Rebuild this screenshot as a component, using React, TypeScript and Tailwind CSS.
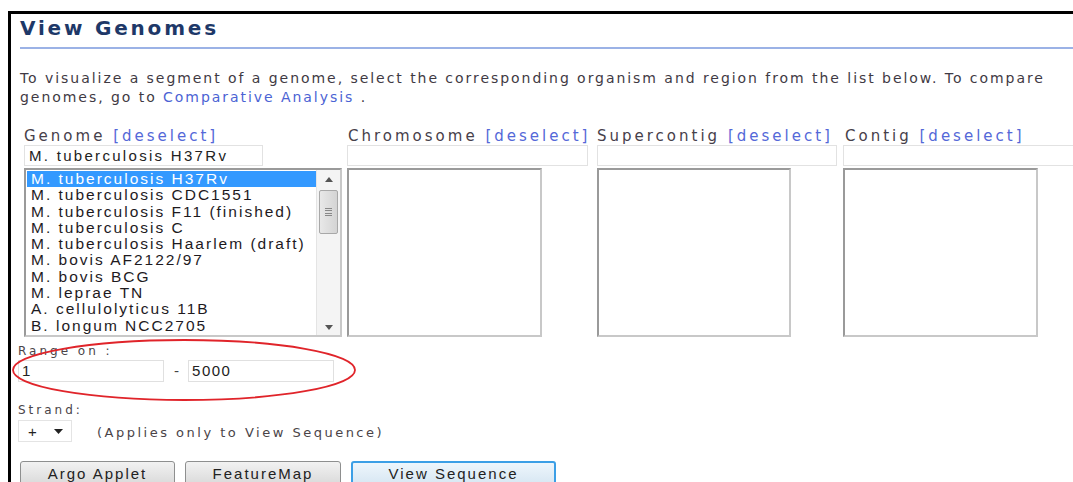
import React from "react";

const genomes = [
  "M. tuberculosis H37Rv",
  "M. tuberculosis CDC1551",
  "M. tuberculosis F11 (finished)",
  "M. tuberculosis C",
  "M. tuberculosis Haarlem (draft)",
  "M. bovis AF2122/97",
  "M. bovis BCG",
  "M. leprae TN",
  "A. cellulolyticus 11B",
  "B. longum NCC2705",
];

const verdana = { fontFamily: "'DejaVu Sans', Verdana, sans-serif" };
const arial = { fontFamily: "'Liberation Sans', Arial, sans-serif" };

function Label({ name }: { name: string }) {
  return (
    <div
      className="text-[15px] leading-[18px] text-[#46404a] whitespace-nowrap tracking-[3px]"
      style={verdana}
    >
      {name} <span className="text-[#5468d8]">[deselect]</span>
    </div>
  );
}

function EmptyList({ w }: { w: string }) {
  return (
    <div
      className={`${w} h-[169px] border-[2px] border-t-[#9a9a9a] border-l-[#9a9a9a] border-r-[#c8c8c8] border-b-[#c8c8c8] bg-white`}
    />
  );
}

export default function App() {
  return (
    <div className="relative w-[1073px] h-[482px] overflow-hidden bg-white">
      <div className="ml-[8px] mt-[11px] h-[471px] border-t-[3px] border-l-[3px] border-black pl-[9px]">
        <h1
          className="text-[20px] leading-[24px] font-bold text-[#1e3868] pt-[2px] tracking-[2.8px]"
          style={verdana}
        >
          View Genomes
        </h1>
        <div className="mt-[7px] h-[2px] bg-[#9bb2e6]" />
        <p
          className="mt-[20px] text-[14px] leading-[19px] text-[#3f3a44] tracking-[1.95px] whitespace-nowrap"
          style={verdana}
        >
          To visualize a segment of a genome, select the corresponding organism and region from the list below. To compare
          <br />
          genomes, go to <span className="text-[#4b63d4]">Comparative Analysis</span> .
        </p>

        <div className="mt-[20px] flex">
          {/* Genome column */}
          <div className="ml-[4px] w-[324px] shrink-0 flex flex-col">
            <Label name="Genome" />
            <div
              className="w-[239px] h-[21px] border border-[#e2e2e2] px-[4px] text-[15px] leading-[19px] text-[#222] tracking-[2.3px] whitespace-nowrap"
              style={arial}
            >
              M. tuberculosis H37Rv
            </div>
            <div className="mt-[2px] w-[318px] h-[169px] flex border-[2px] border-t-[#9a9a9a] border-l-[#9a9a9a] border-r-[#c8c8c8] border-b-[#c8c8c8] bg-white">
              <div className="flex-1 pt-[1px] pl-[1px] overflow-hidden" style={arial}>
                {genomes.map((g, i) => (
                  <div
                    key={g}
                    className={`h-[16.3px] pl-[4px] text-[15.5px] leading-[16.3px] whitespace-nowrap tracking-[2px] ${
                      i === 0 ? "bg-[#3399ff] text-white" : "text-[#1e1a1e]"
                    }`}
                  >
                    {g}
                  </div>
                ))}
              </div>
              {/* scrollbar */}
              <div className="w-[24px] flex flex-col items-center bg-[#f4f4f4] border-l border-[#e4e4e4]">
                <div className="h-[18px] flex items-center justify-center">
                  <svg width="8" height="5" viewBox="0 0 8 5">
                    <path d="M0 5 L4 0 L8 5 Z" fill="#555" />
                  </svg>
                </div>
                <div className="mt-[2px] w-[19px] h-[44px] rounded-[2px] border border-[#a8a8a8] bg-gradient-to-r from-[#e8e8e8] to-[#d4d4d4] flex items-center justify-center">
                  <div className="w-[7px] h-[8px] flex flex-col justify-between">
                    <div className="h-[1px] bg-[#888]" />
                    <div className="h-[1px] bg-[#888]" />
                    <div className="h-[1px] bg-[#888]" />
                    <div className="h-[1px] bg-[#888]" />
                  </div>
                </div>
                <div className="flex-1" />
                <div className="h-[16px] flex items-center justify-center">
                  <svg width="8" height="5" viewBox="0 0 8 5">
                    <path d="M0 0 L8 0 L4 5 Z" fill="#555" />
                  </svg>
                </div>
              </div>
            </div>
          </div>

          {/* Chromosome column */}
          <div className="w-[249px] shrink-0 flex flex-col">
            <Label name="Chromosome" />
            <div className="-ml-[1px] w-[241px] h-[21px] border border-[#e2e2e2]" />
            <div className="-ml-[1px] mt-[2px]">
              <EmptyList w="w-[195px]" />
            </div>
          </div>

          {/* Supercontig column */}
          <div className="w-[248px] shrink-0 flex flex-col">
            <Label name="Supercontig" />
            <div className="w-[240px] h-[21px] border border-[#e2e2e2]" />
            <div className="mt-[2px]">
              <EmptyList w="w-[194px]" />
            </div>
          </div>

          {/* Contig column */}
          <div className="flex-1 min-w-0 flex flex-col">
            <Label name="Contig" />
            <div className="-ml-[2px] w-[240px] h-[21px] border border-[#e2e2e2]" />
            <div className="-ml-[2px] mt-[2px]">
              <EmptyList w="w-[195px]" />
            </div>
          </div>
        </div>

        {/* Range */}
        <div
          className="ml-[-2px] mt-[7px] text-[12px] leading-[14px] text-[#4a4448] tracking-[3px]"
          style={verdana}
        >
          Range on :
        </div>
        <div className="ml-[-2px] mt-[2px] flex items-center">
          <div
            className="w-[146px] h-[22px] border border-[#e0e0e0] px-[3px] text-[15px] leading-[20px] text-[#222]"
            style={arial}
          >
            1
          </div>
          <span className="ml-[10px] mr-[9px] text-[14px] text-[#444]" style={verdana}>
            -
          </span>
          <div
            className="w-[146px] h-[22px] border border-[#e0e0e0] px-[3px] text-[15px] leading-[20px] text-[#222] tracking-[1.5px]"
            style={arial}
          >
            5000
          </div>
        </div>

        {/* Strand */}
        <div
          className="ml-[-2px] mt-[21px] text-[12px] leading-[14px] text-[#4a4448] tracking-[3px]"
          style={verdana}
        >
          Strand:
        </div>
        <div className="ml-[-2px] mt-[3px] flex items-center">
          <div className="w-[54px] h-[22px] border border-[#e4e4e4] flex items-center justify-between pl-[9px] pr-[8px]">
            <span className="text-[15px] leading-[15px] text-[#222]" style={arial}>
              +
            </span>
            <svg width="9" height="5" viewBox="0 0 9 5">
              <path d="M0 0 L9 0 L4.5 5 Z" fill="#222" />
            </svg>
          </div>
          <span
            className="ml-[25px] mt-[3px] text-[13px] text-[#4a4448] tracking-[2.5px] whitespace-nowrap"
            style={verdana}
          >
            (Applies only to View Sequence)
          </span>
        </div>

        {/* Buttons */}
        <div className="mt-[18px] flex gap-[10px]">
          <button
            className="w-[155px] h-[26px] rounded-[3px] border border-[#8e8f8f] bg-gradient-to-b from-[#f2f2f2] to-[#d8d8d8] text-[15px] leading-[20px] text-[#222] tracking-[2px]"
            style={arial}
          >
            Argo Applet
          </button>
          <button
            className="w-[156px] h-[26px] rounded-[3px] border border-[#8e8f8f] bg-gradient-to-b from-[#f2f2f2] to-[#d8d8d8] text-[15px] leading-[20px] text-[#222] tracking-[2px]"
            style={arial}
          >
            FeatureMap
          </button>
          <button
            className="w-[205px] h-[26px] rounded-[3px] border-[2px] border-[#3c9fe6] bg-gradient-to-b from-[#eef6fc] to-[#d6e6f2] text-[15px] leading-[18px] text-[#222] tracking-[2px]"
            style={arial}
          >
            View Sequence
          </button>
        </div>
      </div>

      {/* annotation ellipse around the range inputs */}
      <svg
        className="absolute left-0 top-0 pointer-events-none"
        width="1073"
        height="482"
        viewBox="0 0 1073 482"
      >
        <ellipse cx="184" cy="370" rx="171" ry="30" fill="none" stroke="#e0242a" strokeWidth="1.8" />
      </svg>
    </div>
  );
}
